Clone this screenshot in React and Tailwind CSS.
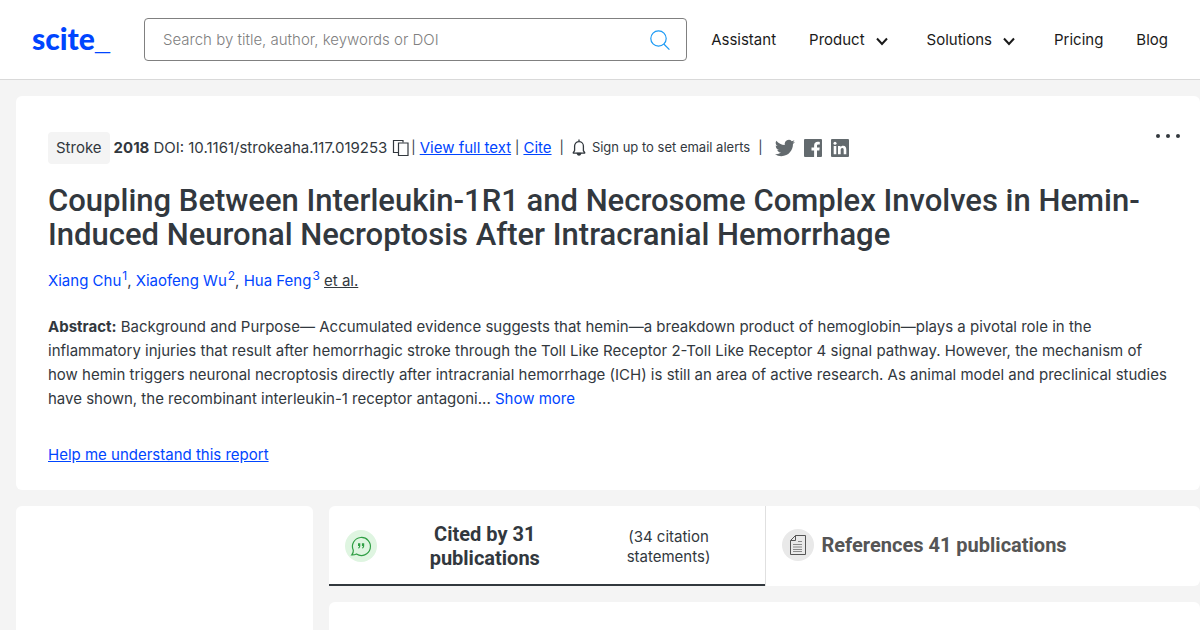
import React from 'react'

const authors = [
  { name: 'Xiang Chu', affiliation: 1 },
  { name: 'Xiaofeng Wu', affiliation: 2 },
  { name: 'Hua Feng', affiliation: 3 },
]

function Chevron() {
  return (
    <svg className="w-6 h-6 ml-[5px]" viewBox="0 0 24 24" fill="none" stroke="currentColor" strokeWidth="2">
      <path d="M7 9.500l5 5.500 5-5.500" />
    </svg>
  )
}

function CopyIcon() {
  return (
    <svg className="w-[18px] h-[18px]" viewBox="0 0 18 18" fill="none" stroke="currentColor" strokeWidth="1.200">
      <path d="M6 13.500H1.500v-12h9.500v2" />
      <path d="M6.500 4h9.500v12.500H6.500z" />
    </svg>
  )
}

function BellIcon() {
  return (
    <svg className="w-[14px] h-[18px]" viewBox="0 0 14 18" fill="none" stroke="currentColor" strokeWidth="1.3">
      <path d="M7 .6v1.900M.8 14.100h12.400M2.600 11.700V7a4.400 4.400 0 018.800 0v4.700l1.600 2.400M2.600 11.700L1 14.100" />
      <path d="M5.300 14.500a1.800 2.200 0 003.400 0z" fill="currentColor" />
    </svg>
  )
}

function TwitterIcon() {
  return (
    <svg className="w-5 h-5" viewBox="0 0 24 24" fill="currentColor">
      <path d="M23.95 4.57a10 10 0 01-2.82.77 4.96 4.96 0 002.16-2.72c-.95.55-2 .96-3.13 1.18a4.92 4.92 0 00-8.38 4.48C7.69 8.1 4.07 6.13 1.64 3.16a4.9 4.9 0 001.52 6.57 4.9 4.9 0 01-2.23-.61v.06a4.92 4.92 0 003.95 4.83 5 5 0 01-2.21.08 4.94 4.94 0 004.6 3.42A9.87 9.87 0 010 19.54a14 14 0 007.55 2.21c9.05 0 14-7.5 14-13.98 0-.21 0-.42-.02-.63a9.94 9.94 0 002.42-2.57z" />
    </svg>
  )
}

function FacebookIcon() {
  return (
    <svg className="w-[18px] h-[18px]" viewBox="0 0 18 18">
      <rect width="18" height="18" rx="1" fill="currentColor" />
      <path
        d="M10.100 18v-6.500H7.500V8.600h2.600V6.500c0-2.500 1.500-3.700 3.600-3.700 1 0 1.800.1 2.100.1v2.500h-1.400c-1.200 0-1.400.6-1.400 1.400v1.800h2.700l-.4 2.900H13V18z"
        fill="#fff"
      />
    </svg>
  )
}

function LinkedinIcon() {
  return (
    <svg className="w-[18px] h-[18px]" viewBox="0 0 18 18">
      <rect width="18" height="18" rx="1" fill="currentColor" />
      <circle cx="4" cy="4.200" r="1.500" fill="#fff" />
      <path
        d="M2.700 7h2.600v8.300H2.700zM7 7h2.500v1.200c.5-.8 1.300-1.400 2.600-1.400 2.600 0 3.200 1.700 3.200 4v4.500h-2.600v-4c0-1 0-2.200-1.400-2.200s-1.600 1-1.600 2.100v4.100H7z"
        fill="#fff"
      />
    </svg>
  )
}

function QuoteBubbleIcon() {
  return (
    <svg className="w-8 h-8 shrink-0" viewBox="0 0 32 32" fill="none">
      <circle cx="16" cy="16" r="16" fill="#dff5e1" />
      <path
        d="M8.300 20.300A9 9 0 1111.500 24c-1.500.7-3 1-4.700.9 1.200-1.300 1.700-2.800 1.500-4.600z"
        stroke="#2f9e44"
        strokeWidth="1.200"
      />
      <path
        d="M13 13.300h2.300v2.400c0 1.400-.6 2.400-1.900 2.800l-.3-.7c.7-.4 1-.9 1-1.700H13zM16.900 13.300h2.300v2.400c0 1.400-.6 2.400-1.900 2.800l-.3-.7c.7-.4 1-.9 1-1.700h-1.100z"
        fill="#2f9e44"
      />
    </svg>
  )
}

function DocumentIcon() {
  return (
    <svg className="w-8 h-8 shrink-0" viewBox="0 0 32 32" fill="none">
      <circle cx="16" cy="16" r="16" fill="#e9e9e9" />
      <path d="M13.500 6.500h10v19h-15v-14zM13.500 6.500v5h-5" stroke="#555" />
      <path d="M16 12.500h4M11 15.500h9M11 18h9M11 20.500h9M11 22.500h9" stroke="#8a8a8a" />
    </svg>
  )
}

function Divider() {
  return <span className="text-[13px]">|</span>
}

function Header() {
  return (
    <header className="flex items-center h-20 px-8 bg-white border-b border-[#d9d9d9]">
      <a
        href="#"
        className="w-20 shrink-0 font-['Lato'] font-black text-[30px] leading-8 text-[#0045ff]"
      >
        scite<span className="font-['Liberation_Sans'] font-bold text-[27px]">_</span>
      </a>
      <form className="flex items-center flex-1 h-[43px] ml-8 mr-6 pl-[18px] pr-4 border border-[#808080] rounded">
        <input
          type="text"
          aria-label="Search"
          placeholder="Search by title, author, keywords or DOI"
          className="flex-1 min-w-0 pt-0.5 font-light outline-none placeholder:text-[#808080]"
        />
        <button type="button" aria-label="Submit search" className="text-[#1b9af5]">
          <svg className="w-5 h-5" viewBox="0 0 20 20" fill="none" stroke="currentColor" strokeWidth="1.200">
            <circle cx="8.500" cy="8.500" r="7.700" />
            <path d="M13.800 14l5.600 5.600" />
          </svg>
        </button>
      </form>
      <nav className="flex items-center gap-[33px] pt-0.5 text-[#1a1a1a]">
        <a href="#">Assistant</a>
        <button type="button" className="flex items-center">
          Product
          <Chevron />
        </button>
        <button type="button" className="flex items-center">
          Solutions
          <Chevron />
        </button>
        <a href="#">Pricing</a>
        <a href="#">Blog</a>
      </nav>
    </header>
  )
}

function ArticleMeta() {
  return (
    <div className="flex items-start justify-between">
      <div className="flex items-center h-8">
        <span className="px-2 py-1 leading-6 bg-[#f4f4f4] rounded">Stroke</span>
        <strong className="ml-1 font-bold">2018</strong>
        <span className="ml-1">DOI: 10.1161/strokeaha.117.019253</span>
        <button type="button" aria-label="Copy DOI" className="ml-[5px] mr-px">
          <CopyIcon />
        </button>
        <Divider />
        <a href="#" className="mx-1 text-[#0045ff] underline">View full text</a>
        <Divider />
        <a href="#" className="ml-1 mr-2 text-[#0045ff] underline">Cite</a>
        <Divider />
        <button type="button" className="flex items-center gap-[6px] mx-2 text-[13px]">
          <BellIcon />
          Sign up to set email alerts
        </button>
        <Divider />
        <div className="flex items-center gap-[9px] ml-3 text-[#636a6e]">
          <a href="#" aria-label="Share on Twitter"><TwitterIcon /></a>
          <a href="#" aria-label="Share on Facebook"><FacebookIcon /></a>
          <a href="#" aria-label="Share on LinkedIn"><LinkedinIcon /></a>
        </div>
      </div>
      <button type="button" aria-label="More options" className="flex gap-[6px] pt-[2px] -mr-3">
        <span className="w-1 h-1 bg-[#32383e] rounded-full" />
        <span className="w-1 h-1 bg-[#32383e] rounded-full" />
        <span className="w-1 h-1 bg-[#32383e] rounded-full" />
      </button>
    </div>
  )
}

function Article() {
  return (
    <article className="px-8 pt-9 pb-[23px] bg-white rounded-md">
      <ArticleMeta />
      <h1 className="mt-5 font-['Roboto'] text-[31px] leading-[34px] font-medium">
        Coupling Between Interleukin-1R1 and Necrosome Complex Involves in Hemin-Induced Neuronal
        Necroptosis After Intracranial Hemorrhage
      </h1>
      <p className="mt-[17px] leading-6">
        {authors.map((author) => (
          <React.Fragment key={author.name}>
            <a href="#" className="text-[#0045ff]">
              {author.name}
              <sup className="ml-px text-xs">{author.affiliation}</sup>
            </a>
            {author.affiliation < authors.length ? ', ' : ' '}
          </React.Fragment>
        ))}
        <button type="button" className="underline">et al.</button>
      </p>
      <p className="mt-[22px] leading-6">
        <strong className="font-bold">Abstract:</strong> Background and Purpose— Accumulated evidence suggests that
        hemin—a breakdown product of hemoglobin—plays a pivotal role in the inflammatory injuries that result after
        hemorrhagic stroke through the Toll Like Receptor 2-Toll Like Receptor 4 signal pathway. However, the mechanism
        of how hemin triggers neuronal necroptosis directly after intracranial hemorrhage (ICH) is still an area of
        active research. As animal model and preclinical studies have shown, the recombinant interleukin-1 receptor
        antagoni...{' '}
        <button type="button" className="text-[#0045ff]">Show more</button>
      </p>
      <a href="#" className="inline-block mt-8 leading-6 text-[#0045ff] underline">
        Help me understand this report
      </a>
    </article>
  )
}

function CitationTabs() {
  return (
    <div role="tablist" className="grid grid-cols-2 h-20 bg-white rounded-t-md rounded-br-md">
      <button
        type="button"
        role="tab"
        aria-selected="true"
        className="flex items-center px-4 pt-0.5 border-b-2 border-[#32383e]"
      >
        <QuoteBubbleIcon />
        <span className="flex-1 px-8 font-['Roboto'] text-xl leading-6 font-bold">Cited by 31 publications</span>
        <span className="w-[156px] pt-0.5 pl-7 pr-8 leading-5">(34 citation statements)</span>
      </button>
      <button
        type="button"
        role="tab"
        aria-selected="false"
        className="flex items-center gap-2 px-4 pb-0.5 border-l border-[#e0e0e0] text-[#555]"
      >
        <DocumentIcon />
        <span className="font-['Roboto'] text-xl leading-6 font-bold">References 41 publications</span>
      </button>
    </div>
  )
}

export default function App() {
  return (
    <div className="flex flex-col min-h-screen bg-[#f4f4f4] font-['Inter','Liberation_Sans',sans-serif] text-[15px] text-[#32383e]">
      <Header />
      <main className="flex flex-col flex-1 gap-4 pt-4 pl-4">
        <Article />
        <div className="flex flex-1 gap-4">
          <aside className="w-[297px] shrink-0 bg-white rounded-t-md" />
          <section className="flex flex-col flex-1 gap-4">
            <CitationTabs />
            <div className="flex-1 bg-white rounded-t-md" />
          </section>
        </div>
      </main>
    </div>
  )
}
